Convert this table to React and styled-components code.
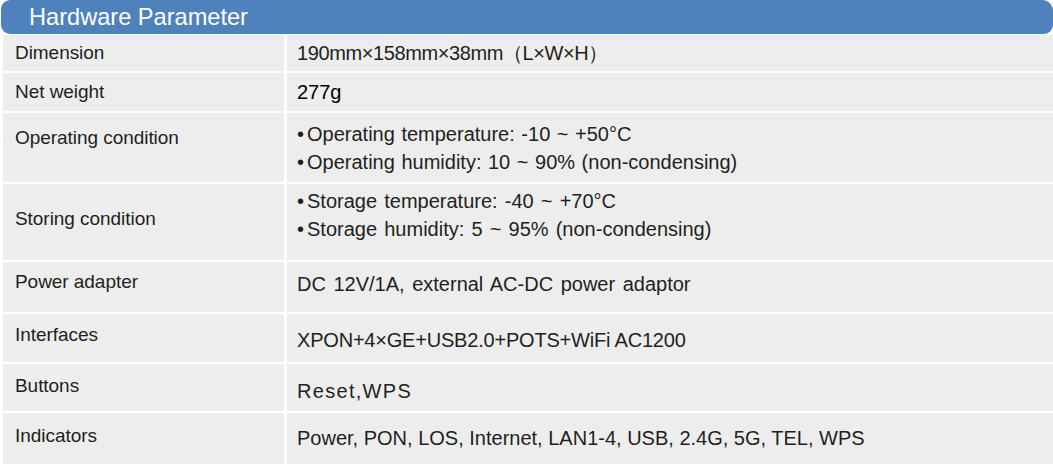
import React from "react";
import styled, { createGlobalStyle } from "styled-components";

const GlobalStyle = createGlobalStyle`
  html, body {
    margin: 0;
    padding: 0;
    background: #ffffff;
  }
  body {
    font-family: "Liberation Sans", Arial, sans-serif;
  }
`;

const Sheet = styled.div`
  width: 1053px;
  height: 464px;
  display: flex;
  flex-direction: column;
  overflow: hidden;
`;

const Title = styled.div`
  height: 34px;
  margin-left: 1px;
  margin-bottom: 1px;
  background: #4f81bd;
  border-radius: 9px 11px 9px 9px;
  color: #ffffff;
  font-size: 23.6px;
  line-height: 34px;
  padding-left: 28px;
  box-sizing: border-box;
`;

const Table = styled.div`
  display: grid;
  grid-template-columns: 281px 1fr;
  column-gap: 3px;
  row-gap: 2px;
  padding-left: 3px;
`;

// shift > 0 moves the content up, shift < 0 moves it down
const Label = styled.div`
  height: ${(p) => p.h}px;
  background: #ededed;
  box-sizing: border-box;
  padding-left: 12px;
  padding-bottom: ${(p) => Math.max(p.shift || 0, 0)}px;
  padding-top: ${(p) => Math.max(-(p.shift || 0), 0)}px;
  display: flex;
  align-items: center;
  color: #231f20;
  font-size: 19px;
  letter-spacing: -0.05px;
`;

const Value = styled.div`
  height: ${(p) => p.h}px;
  background: #ededed;
  box-sizing: border-box;
  padding-left: 10px;
  padding-bottom: ${(p) => Math.max(p.shift || 0, 0)}px;
  padding-top: ${(p) => Math.max(-(p.shift || 0), 0)}px;
  display: flex;
  flex-direction: column;
  justify-content: center;
  color: ${(p) => (p.dark ? "#000000" : "#231f20")};
  font-size: 20px;
  letter-spacing: ${(p) => p.spacing || 0}px;
  word-spacing: ${(p) => p.words || 0}px;
`;

const Line = styled.div`
  line-height: 28px;
  white-space: nowrap;
`;

const Bullet = styled.span`
  margin-right: 3px;
`;

const rows = [
  { label: "Dimension", h: 36, spacing: -0.4, lines: ["190mm×158mm×38mm（L×W×H）"] },
  { label: "Net weight", h: 38, lines: ["277g"], dark: true },
  {
    label: "Operating condition",
    h: 69,
    labelShift: 20,
    words: 1,
    bullets: true,
    lines: ["Operating temperature: -10 ~ +50°C", "Operating humidity: 10 ~ 90% (non-condensing)"],
  },
  {
    label: "Storing condition",
    h: 76,
    labelShift: 6,
    valueShift: 14,
    words: 1.6,
    bullets: true,
    lines: ["Storage temperature: -40 ~ +70°C", "Storage humidity: 5 ~ 95% (non-condensing)"],
  },
  {
    label: "Power adapter",
    h: 50,
    labelShift: 10,
    valueShift: 6,
    words: 2,
    lines: ["DC 12V/1A, external AC-DC power adaptor"],
  },
  { label: "Interfaces", h: 48, labelShift: 6, valueShift: -4, spacing: -0.2, lines: ["XPON+4×GE+USB2.0+POTS+WiFi AC1200"] },
  { label: "Buttons", h: 47, labelShift: 4, valueShift: -6, spacing: 1.3, lines: ["Reset,WPS"] },
  { label: "Indicators", h: 51, labelShift: 6, valueShift: 2, lines: ["Power, PON, LOS, Internet, LAN1-4, USB, 2.4G, 5G, TEL, WPS"] },
];

const App = () => {
  return (
    <React.Fragment>
      <GlobalStyle />
      <Sheet>
        <Title>Hardware Parameter</Title>
        <Table>
          {rows.map((row, index) => (
            <React.Fragment key={index}>
              <Label h={row.h} shift={row.labelShift}>
                {row.label}
              </Label>
              <Value h={row.h} shift={row.valueShift} dark={row.dark} spacing={row.spacing} words={row.words}>
                {row.lines.map((line, i) => (
                  <Line key={i}>
                    {row.bullets && <Bullet>•</Bullet>}
                    {line}
                  </Line>
                ))}
              </Value>
            </React.Fragment>
          ))}
        </Table>
      </Sheet>
    </React.Fragment>
  );
};

export default App;
